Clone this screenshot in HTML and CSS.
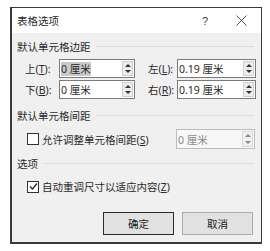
FILE: index.html
```html
<!DOCTYPE html>
<html lang="zh-CN">
<head>
<meta charset="utf-8">
<title>表格选项</title>
<link rel="stylesheet" href="styles.css">
</head>
<body>
<div class="dialog">
  <div class="titlebar">
    <span class="title">表格选项</span>
    <span class="help">?</span>
    <span class="close">
      <svg width="11" height="11" viewBox="0 0 11 11"><path d="M0.5 0.5 L10.5 10.5 M10.5 0.5 L0.5 10.5" stroke="#555" stroke-width="1" fill="none"/></svg>
    </span>
  </div>
  <div class="content">
    <div class="section">默认单元格边距</div>
    <div class="margins">
      <div class="field">
        <span class="label">上(<u>T</u>):</span>
        <div class="spin"><span class="val"><span class="sel">0 厘米</span></span><span class="arrows"><span class="up"></span><span class="down"></span></span></div>
      </div>
      <div class="field right">
        <span class="label">左(<u>L</u>):</span>
        <div class="spin"><span class="val">0.19 厘米</span><span class="arrows"><span class="up"></span><span class="down"></span></span></div>
      </div>
      <div class="field">
        <span class="label">下(<u>B</u>):</span>
        <div class="spin"><span class="val">0 厘米</span><span class="arrows"><span class="up"></span><span class="down"></span></span></div>
      </div>
      <div class="field right">
        <span class="label">右(<u>R</u>):</span>
        <div class="spin"><span class="val">0.19 厘米</span><span class="arrows"><span class="up"></span><span class="down"></span></span></div>
      </div>
    </div>
    <div class="section sec2">默认单元格间距</div>
    <div class="option-row spacing-row">
      <span class="check"></span>
      <span class="check-text">允许调整单元格间距(<u>S</u>)</span>
      <div class="spin disabled"><span class="val">0 厘米</span><span class="arrows"><span class="up"></span><span class="down"></span></span></div>
    </div>
    <div class="section">选项</div>
    <div class="option-row opt2">
      <span class="check checked">
        <svg width="9" height="9" viewBox="0 0 9 9"><path d="M1 4.5 L3.5 7 L8 1.5" stroke="#222" stroke-width="1.2" fill="none"/></svg>
      </span>
      <span class="check-text">自动重调尺寸以适应内容(<u>Z</u>)</span>
    </div>
    <div class="buttons">
      <button class="btn default">确定</button>
      <button class="btn">取消</button>
    </div>
  </div>
</div>
</body>
</html>
```

FILE: styles.css
```css
html, body {
  margin: 0;
  padding: 0;
  background: #ffffff;
}
body {
  font-family: "Noto Sans", "Noto Sans CJK SC", sans-serif;
  font-size: 10.5px;
  color: #2a2a2a;
}
.dialog {
  margin: 7px 0 0 10px;
  width: 249px;
  height: 234px;
  border: 1px solid #3a3a3a;
  border-left-width: 2px;
  border-bottom-width: 2px;
  background: #f0f0f0;
  display: flex;
  flex-direction: column;
}
.titlebar {
  height: 25px;
  background: #ffffff;
  display: flex;
  align-items: center;
  padding-left: 5px;
}
.title {
  flex: 1;
  font-size: 10.5px;
}
.help {
  width: 12px;
  margin-right: 22px;
  color: #444;
  font-family: "Liberation Sans", sans-serif;
  font-size: 11px;
}
.close {
  width: 11px;
  height: 11px;
  margin-right: 14px;
  display: flex;
}
.content {
  flex: 1;
  padding: 5px 5px 0 5px;
  display: flex;
  flex-direction: column;
}
.section {
  display: flex;
  align-items: center;
  height: 16px;
  flex-shrink: 0;
}
.section::after {
  content: "";
  flex: 1;
  margin-left: 5px;
  margin-right: 2px;
  border-top: 1px solid #dcdcdc;
}
.margins {
  display: grid;
  grid-template-columns: 123px 108px;
  row-gap: 2px;
  padding-left: 8px;
  margin-top: 5px;
}
.sec2 {
  margin-top: 8px;
}
.field {
  display: flex;
  align-items: center;
}
.label {
  width: 34px;
  flex-shrink: 0;
}
.field.right .label {
  width: 29px;
}
.field.right .spin {
  width: 79px;
}
u {
  text-decoration: underline;
  text-underline-offset: 1px;
}
.spin {
  width: 76px;
  height: 19px;
  box-sizing: border-box;
  border: 1px solid #7a7a7a;
  background: #ffffff;
  display: flex;
  align-items: stretch;
  flex-shrink: 0;
}
.val {
  flex: 1;
  display: flex;
  align-items: center;
  padding-left: 1px;
  font-size: 10.5px;
}
.sel {
  background: #c9c9c9;
  line-height: 14px;
}
.arrows {
  width: 11px;
  display: flex;
  flex-direction: column;
  margin: 1px;
  background: #ececec;
  border: 1px solid #d0d0d0;
  box-sizing: border-box;
}
.up, .down {
  flex: 1;
  display: flex;
  align-items: center;
  justify-content: center;
}
.up::before {
  content: "";
  border-left: 3px solid transparent;
  border-right: 3px solid transparent;
  border-bottom: 3px solid #333;
}
.down::before {
  content: "";
  border-left: 3px solid transparent;
  border-right: 3px solid transparent;
  border-top: 3px solid #333;
}
.spin.disabled {
  width: 79px;
  height: 20px;
  margin-left: auto;
  margin-right: 1px;
  border-color: #bcbcbc;
  background: #f7f7f7;
  color: #8a8a8a;
}
.spin.disabled .up::before { border-bottom-color: #888; }
.spin.disabled .down::before { border-top-color: #888; }
.spin.disabled .arrows { background: #f0f0f0; border-color: #dadada; }
.option-row {
  display: flex;
  align-items: center;
  padding-left: 10px;
}
.spacing-row {
  margin-top: 6px;
  margin-bottom: 6px;
}
.opt2 {
  margin-top: 8px;
}
.check-text {
  white-space: nowrap;
}
.check {
  width: 10px;
  height: 10px;
  border: 1px solid #333;
  background: #ffffff;
  display: flex;
  align-items: center;
  justify-content: center;
  margin-right: 3px;
  flex-shrink: 0;
}
.buttons {
  display: flex;
  justify-content: flex-end;
  gap: 8px;
  margin-top: auto;
  margin-bottom: 7px;
  padding-right: 3px;
}
.btn {
  width: 71px;
  height: 23px;
  font-family: "Noto Sans CJK SC", sans-serif;
  font-size: 10.5px;
  color: #1a1a1a;
  background: #e1e1e1;
  border: 1px solid #adadad;
  padding: 0;
}
.btn.default {
  border-color: #2b2b2b;
}
```
